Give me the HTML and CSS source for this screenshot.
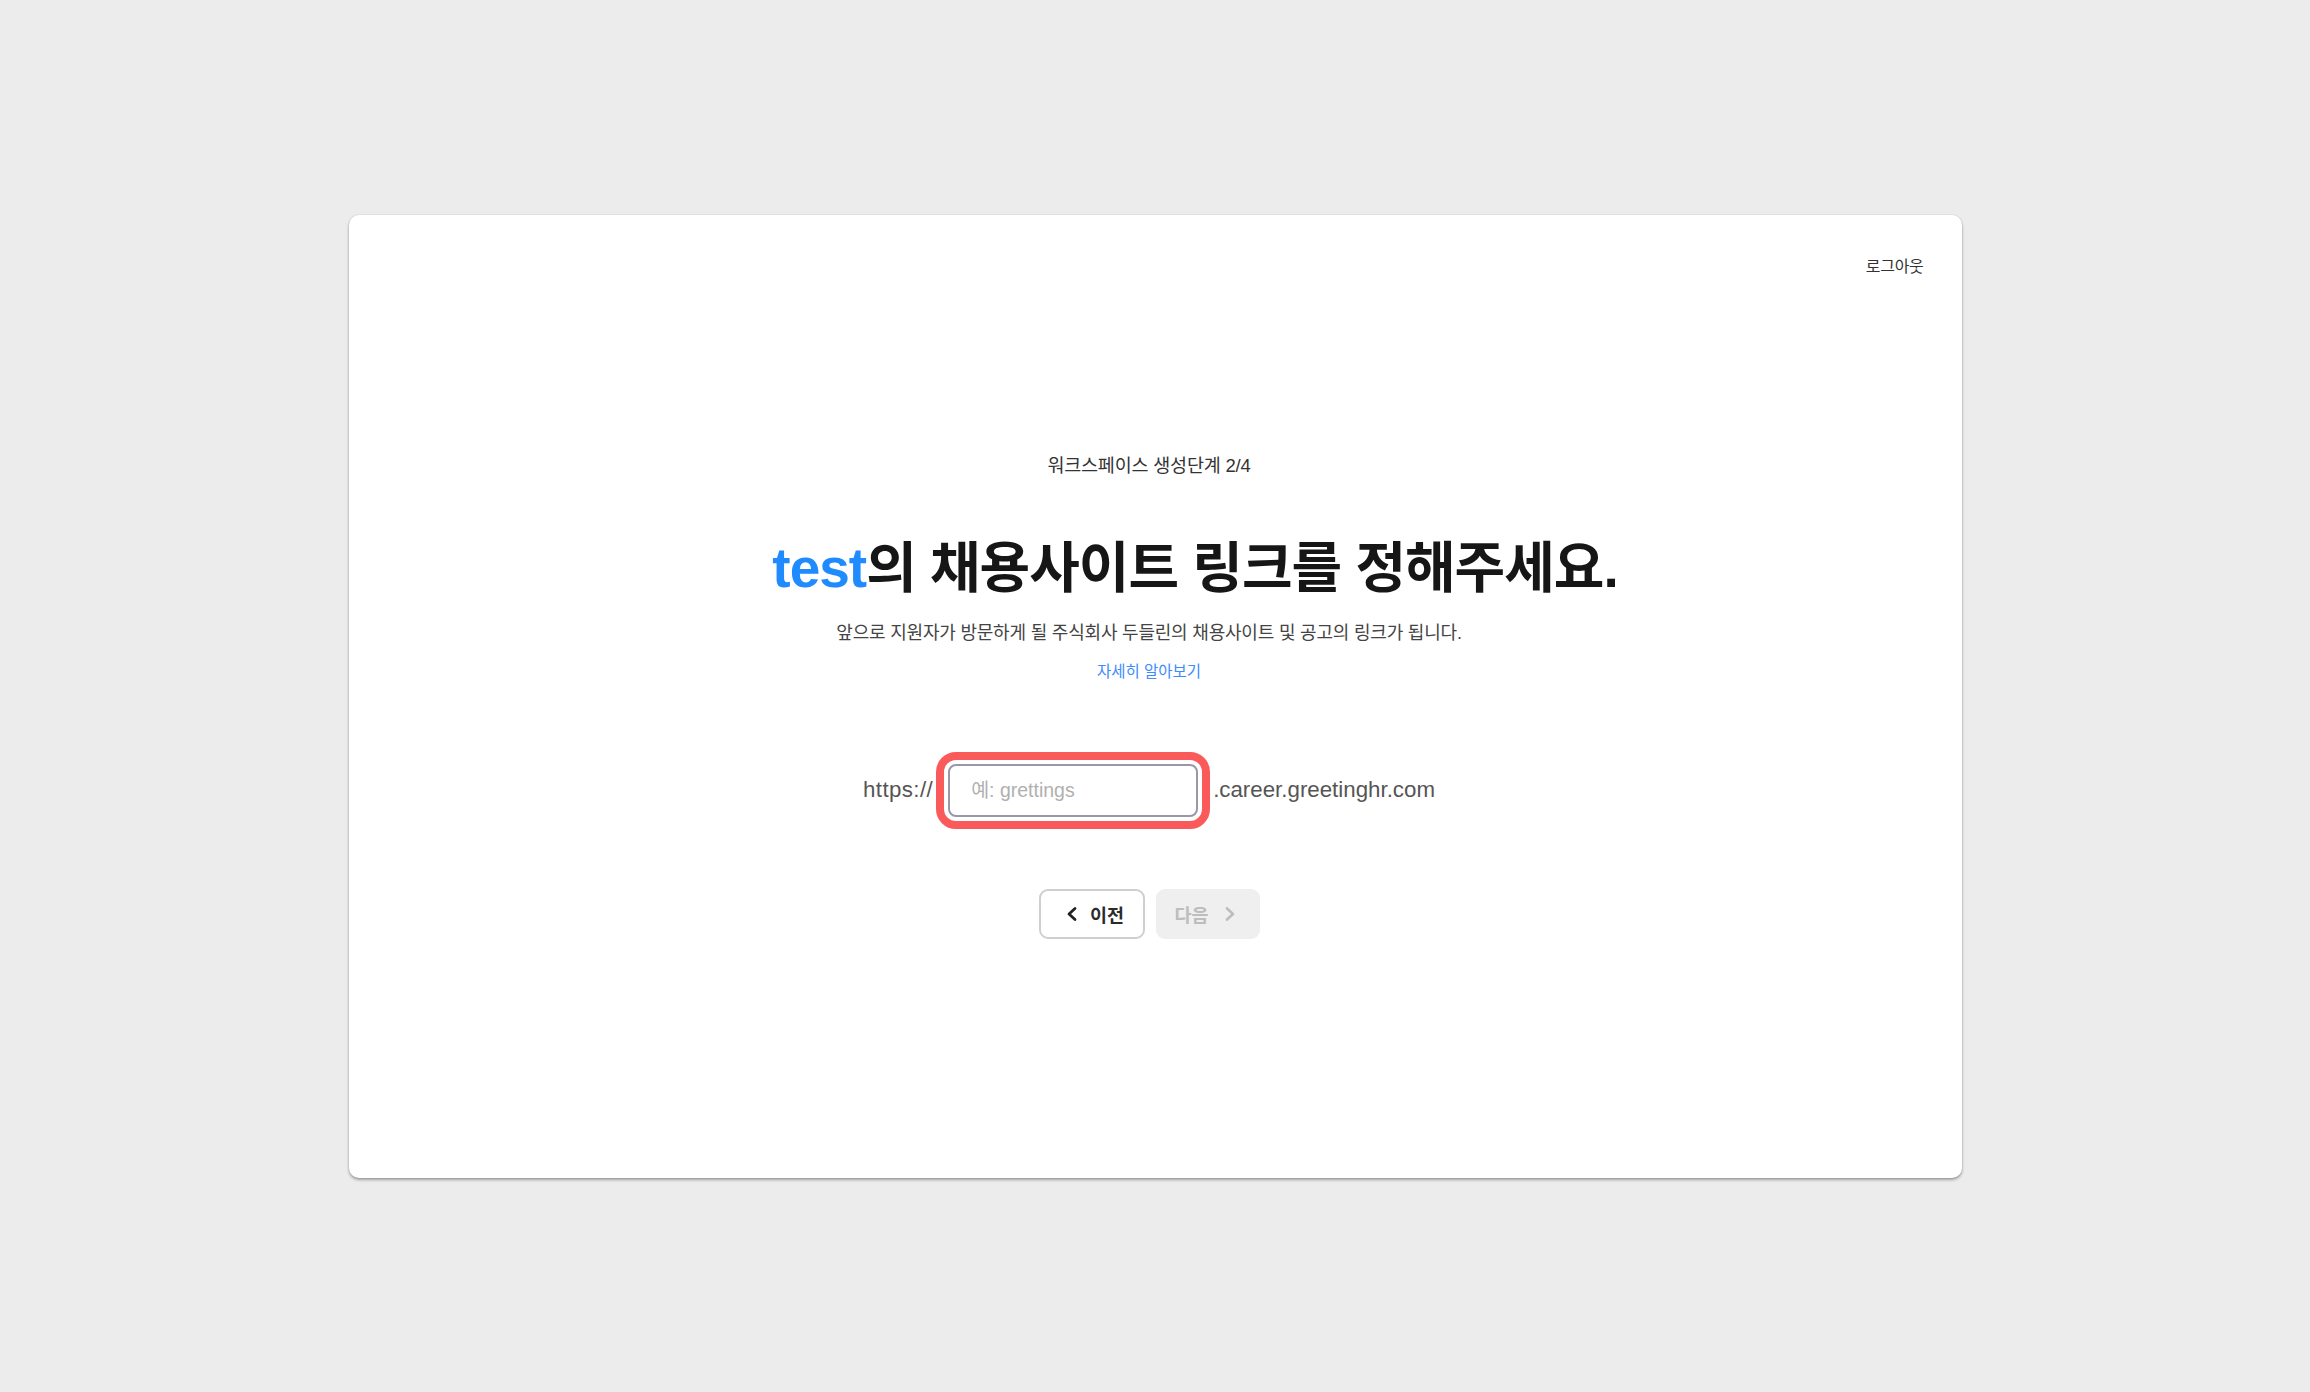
FILE: index.html
```html
<!DOCTYPE html>
<html lang="ko">
<head>
    <meta charset="UTF-8">
    <meta name="viewport" content="width=device-width, initial-scale=1.0">
    <title>워크스페이스 생성 - 채용사이트 링크</title>
    <link rel="stylesheet" href="styles.css">
</head>
<body>
    <div class="page">
        <!-- 카드 -->
        <div class="card">
            <div class="card-header">
                <a class="logout" href="#">로그아웃</a>
            </div>

            <div class="card-main">
                <div class="step">워크스페이스 생성단계 2/4</div>
                <h1 class="title"><span class="title-name">test</span>의 채용사이트 링크를 정해주세요.</h1>
                <p class="desc">앞으로 지원자가 방문하게 될 주식회사 두들린의 채용사이트 및 공고의 링크가 됩니다.</p>
                <a class="more" href="#">자세히 알아보기</a>

                <!-- 링크 입력 -->
                <div class="url-row">
                    <span class="url-text url-prefix">https://</span>
                    <input class="url-input" type="text" placeholder="예: grettings">
                    <span class="url-text">.career.greetinghr.com</span>
                </div>

                <!-- 버튼 -->
                <div class="nav-row">
                    <button class="nav-btn prev">
                        <svg width="14" height="16" viewBox="0 0 14 16"><polyline points="10,2.5 4,8 10,13.5" fill="none" stroke="#222" stroke-width="2.8" stroke-linecap="round" stroke-linejoin="round"/></svg>
                        <span>이전</span>
                    </button>
                    <button class="nav-btn next" disabled>
                        <span>다음</span>
                        <svg width="14" height="16" viewBox="0 0 14 16"><polyline points="4,2.5 10,8 4,13.5" fill="none" stroke="#bdbdbd" stroke-width="2.6" stroke-linecap="round" stroke-linejoin="round"/></svg>
                    </button>
                </div>
            </div>
        </div>
    </div>
</body>
</html>
```

FILE: styles.css
```css
/* 기본 스타일 */
* {
    margin: 0;
    padding: 0;
    box-sizing: border-box;
}

body, html {
    width: 100%;
    height: 100%;
    background-color: #ececec;
    font-family: 'Liberation Sans', 'Noto Sans CJK KR', sans-serif;
    color: #222;
}

/* 페이지 */
.page {
    width: 100%;
    height: 100%;
    display: flex;
    align-items: center;
    justify-content: center;
}

/* 카드 */
.card {
    width: 1613px;
    height: 963px;
    background-color: #fff;
    border-radius: 10px;
    box-shadow: 0 0 0 1px rgba(0, 0, 0, 0.04), 0 2px 3px rgba(0, 0, 0, 0.32);
    padding: 38px;
    display: flex;
    flex-direction: column;
}

.card-header {
    height: 24px;
    display: flex;
    justify-content: flex-end;
    align-items: center;
}

.logout {
    font-size: 16px;
    color: #333;
    text-decoration: none;
    letter-spacing: -0.3px;
}

.card-main {
    flex: 1;
    display: flex;
    flex-direction: column;
    align-items: center;
    justify-content: center;
    padding-bottom: 24px;
    padding-right: 12px;
}

/* 텍스트 */
.step {
    font-size: 18.5px;
    line-height: 24px;
    color: #333;
    letter-spacing: -0.2px;
}

.title {
    margin-top: 58px;
    padding-left: 92px;
    font-size: 55px;
    line-height: 64px;
    font-weight: 700;
    color: #161616;
    letter-spacing: -1px;
}

.title-name {
    color: #1f8bff;
}

.desc {
    margin-top: 21px;
    font-size: 18px;
    line-height: 24px;
    color: #444;
    letter-spacing: -0.2px;
}

.more {
    margin-top: 16px;
    font-size: 15.5px;
    line-height: 22px;
    color: #3d8bff;
    text-decoration: none;
}

/* 링크 입력 */
.url-row {
    margin-top: 81px;
    display: flex;
    align-items: center;
    gap: 15px;
}

.url-text {
    font-size: 22.3px;
    color: #555;
}

.url-prefix {
    letter-spacing: 0.4px;
}

.url-input {
    width: 250px;
    height: 53px;
    border: 2px solid #9a98a6;
    border-radius: 8px;
    padding: 0 21px;
    font-family: 'Liberation Sans', 'Noto Sans CJK KR', sans-serif;
    font-size: 19.5px;
    color: #333;
    outline: 8px solid #fa5a5a;
    outline-offset: 4px;
}

.url-input::placeholder {
    color: #b0b0b0;
}

/* 버튼 */
.nav-row {
    margin-top: 72px;
    display: flex;
    gap: 11px;
}

.nav-btn {
    height: 50px;
    width: 106px;
    border-radius: 9px;
    display: flex;
    align-items: center;
    justify-content: center;
    gap: 11px;
    font-family: 'Liberation Sans', 'Noto Sans CJK KR', sans-serif;
    font-size: 18.5px;
    font-weight: 700;
}

.prev {
    background-color: #fff;
    border: 2px solid #cfcfcf;
    color: #2b2b2b;
    padding-left: 6px;
}

.next {
    width: 104px;
    background-color: #efefef;
    border: none;
    color: #bdbdbd;
    padding-right: 4px;
    gap: 14px;
}
```
